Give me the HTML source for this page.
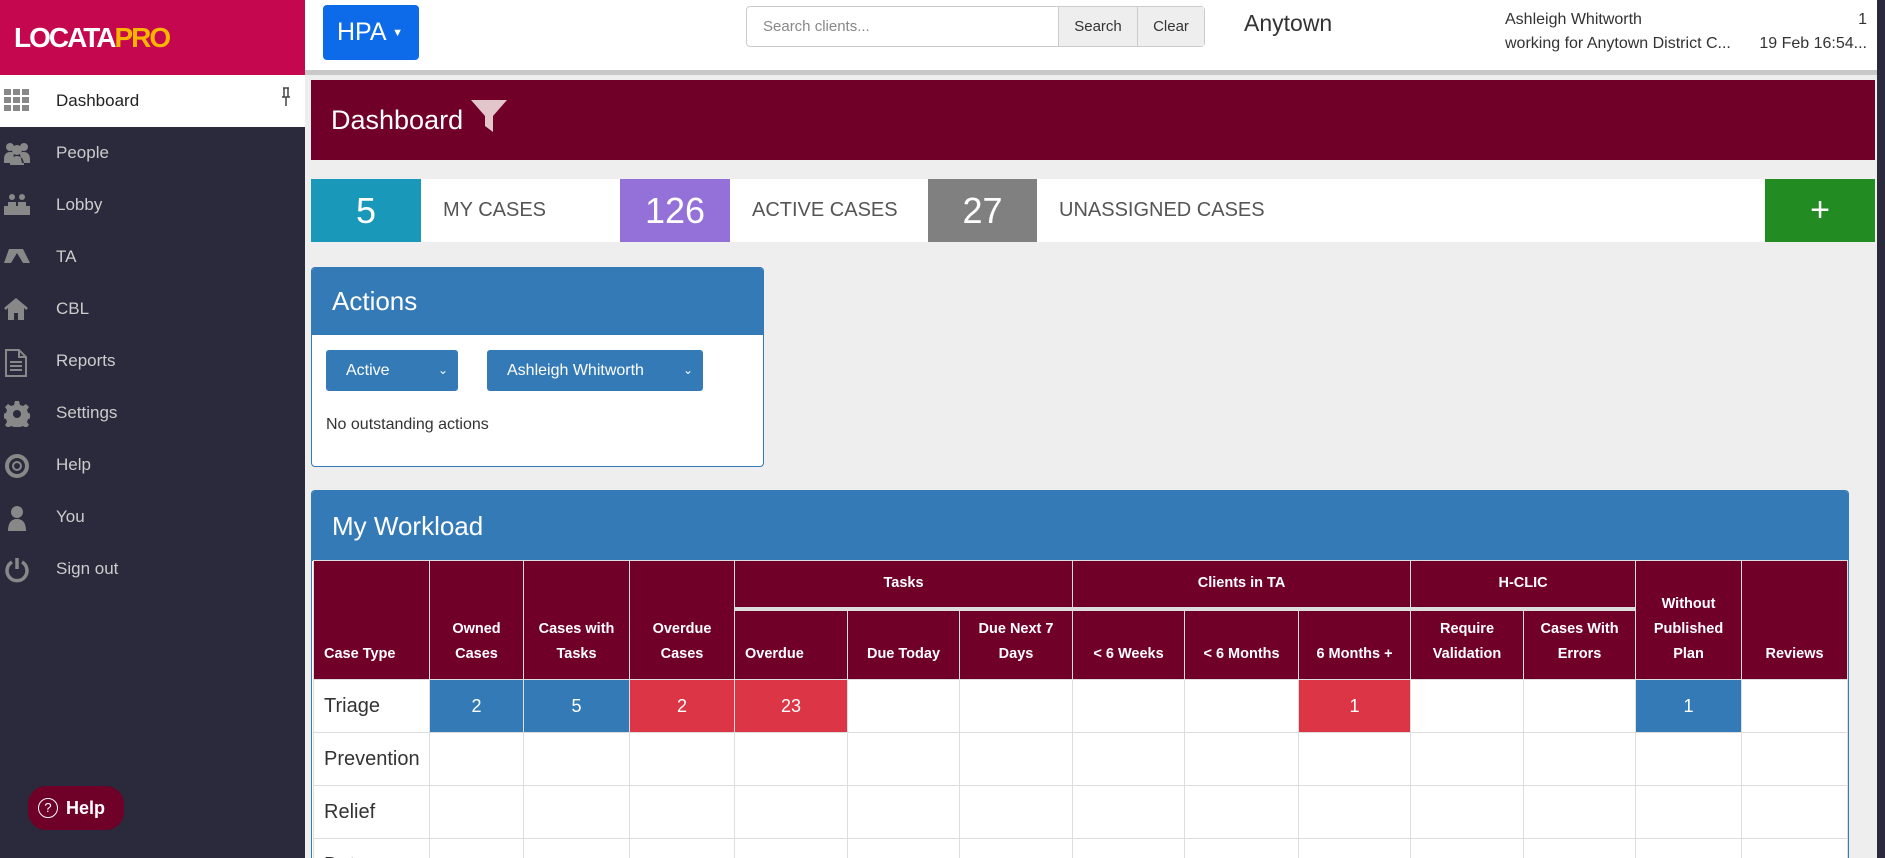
<!DOCTYPE html>
<html style="width:1885px;height:858px;overflow:hidden"><head><meta charset="utf-8"><style>
*{box-sizing:border-box;margin:0;padding:0}
body{width:1885px;height:858px;overflow:hidden;background:#eeeeee;font-family:"Liberation Sans Narrow","Liberation Sans",sans-serif;color:#333;position:relative}
.a{position:absolute}
#logo{left:0;top:0;width:305px;height:75px;background:#c4074f}
#side{left:0;top:75px;width:305px;height:783px;background:#2a2a3c}
.item{position:absolute;left:0;width:305px;height:52px;color:#ccc;font-size:17px;line-height:52px;padding-left:56px}
.item svg{position:absolute;left:4px;top:14px}
#top{left:305px;top:0;width:1580px;height:75px;background:#fff;border-bottom:5px solid #c8c8c8}
.box{position:absolute;top:179px;height:63px;color:#fff;font-size:36px;text-align:center;line-height:63px}
.lbl{position:absolute;top:179px;height:63px;background:#fff;color:#555;font-size:20px;line-height:63px;padding-left:22px}
#wrap{position:absolute;left:311px;top:490px;width:1538px;height:368px;overflow:hidden;background:#fff;border:1px solid #337ab7;border-bottom:none;border-radius:4px 4px 0 0}
table{border-collapse:collapse;table-layout:fixed;position:absolute;left:1px;top:69px;width:1534px;font-size:14.5px}
th{background:#700028;color:#fff;font-weight:bold;border:1px solid #ddd;vertical-align:bottom;padding:0 3px 12px;line-height:25px}
th.g{vertical-align:middle;padding:0;height:48px;border-bottom:4px solid #ddd}
td{height:53px;border:1px solid #ddd;background:#fff;text-align:center;font-size:18px;color:#fff}
td.n{text-align:left;color:#333;font-size:20px;padding-left:10px}
.b{background:#337ab7}.r{background:#dc3545}
</style></head><body>
<div class="a" id="logo"><div class="a" style="left:14px;top:22px;font-size:28px;font-weight:bold;font-family:'Liberation Sans',sans-serif;letter-spacing:-2px;color:#fff">LOCATA<span style="color:#f7b500">PRO</span></div></div>
<div class="a" id="side">
 <div class="item" style="top:0;background:#fff;color:#222">
  <svg width="26" height="22" viewBox="0 0 26 22" fill="#888"><rect x="0" y="0" width="7" height="6"/><rect x="9" y="0" width="7" height="6"/><rect x="18" y="0" width="7" height="6"/><rect x="0" y="8" width="7" height="6"/><rect x="9" y="8" width="7" height="6"/><rect x="18" y="8" width="7" height="6"/><rect x="0" y="16" width="7" height="6"/><rect x="9" y="16" width="7" height="6"/><rect x="18" y="16" width="7" height="6"/></svg>Dashboard
  <svg style="left:281px;top:12px" width="10" height="20" viewBox="0 0 10 20" fill="none" stroke="#444" stroke-width="1.5"><path d="M2 1h6M3 1v9M7 1v9M1 10h8M5 10v9"/></svg></div>
 <div class="item" style="top:52px"><svg width="26" height="24" viewBox="0 0 26 24" fill="#888"><circle cx="6" cy="6" r="4"/><circle cx="20" cy="6" r="4"/><circle cx="13" cy="9" r="5"/><path d="M0 18c0-5 3-7 6-7s4 1 4 2l-2 9H0zM26 18c0-5-3-7-6-7s-4 1-4 2l2 9h8zM6 24c0-6 3-9 7-9s7 3 7 9z"/></svg>People</div>
 <div class="item" style="top:104px"><svg width="26" height="22" viewBox="0 0 26 22" fill="#888"><circle cx="8" cy="4" r="3"/><circle cx="18" cy="4" r="3"/><path d="M4 9h8v4H4zM14 9h8v4h-8zM0 13h26v9H0z"/></svg>Lobby</div>
 <div class="item" style="top:156px"><svg width="26" height="22" viewBox="0 0 26 22" fill="#888"><path d="M5 4h14l7 14H19L13 8l-6 10H0z"/></svg>TA</div>
 <div class="item" style="top:208px"><svg width="24" height="24" viewBox="0 0 24 24" fill="#888"><path d="M12 1L0 11l2 2 2-2v12h6v-7h4v7h6V11l2 2 2-2z"/></svg>CBL</div>
 <div class="item" style="top:260px"><svg width="24" height="28" viewBox="0 0 24 28" fill="none" stroke="#888" stroke-width="2"><path d="M2 1h13l7 7v19H2zM15 1v7h7M6 13h12M6 17h12M6 21h12"/></svg>Reports</div>
 <div class="item" style="top:312px"><svg width="26" height="26" viewBox="0 0 26 26" fill="#888"><path d="M11 0h4l1 4 3 1 3-2 3 3-2 3 1 3 4 1v4l-4 1-1 3 2 3-3 3-3-2-3 1-1 4h-4l-1-4-3-1-3 2-3-3 2-3-1-3-4-1v-4l4-1 1-3-2-3 3-3 3 2 3-1z"/><circle cx="13" cy="13" r="4" fill="#2a2a3c"/></svg>Settings</div>
 <div class="item" style="top:364px"><svg width="26" height="26" viewBox="0 0 26 26" fill="none" stroke="#888" stroke-width="4"><circle cx="13" cy="13" r="10"/><circle cx="13" cy="13" r="4" stroke-width="2"/></svg>Help</div>
 <div class="item" style="top:416px"><svg width="26" height="26" viewBox="0 0 26 26" fill="#888"><circle cx="13" cy="7" r="6"/><path d="M4 26c0-9 4-12 9-12s9 3 9 12z"/></svg>You</div>
 <div class="item" style="top:468px"><svg width="26" height="26" viewBox="0 0 26 26" fill="none" stroke="#888" stroke-width="3.5"><path d="M8 5a10 10 0 1 0 10 0M13 1v11"/></svg>Sign out</div>
 <div class="a" style="left:28px;top:711px;width:96px;height:44px;background:#6f0027;border-radius:18px;color:#fff;font-weight:bold;font-size:18px;line-height:44px;padding-left:38px"><span style="position:absolute;left:10px;top:12px;width:20px;height:20px;border:1.5px solid #fff;border-radius:50%;font-size:13px;line-height:17px;text-align:center;font-weight:normal">?</span>Help</div>
</div>
<div class="a" id="top"></div>
<div class="a" style="left:323px;top:5px;width:96px;height:55px;background:#0d6ae8;border-radius:4px;color:#fff;font-size:25px;line-height:55px;padding-left:14px">HPA <span style="font-size:11px;vertical-align:middle">&#9660;</span></div>
<div class="a" style="left:746px;top:6px;width:459px;height:41px;border:1px solid #ccc;border-radius:4px;background:#fff;font-size:15px;line-height:39px">
 <span style="position:absolute;left:16px;color:#888">Search clients...</span>
 <span style="position:absolute;left:311px;width:79px;height:39px;background:#eee;border-left:1px solid #ccc;text-align:center;color:#333">Search</span>
 <span style="position:absolute;left:390px;width:67px;height:39px;background:#eee;border-left:1px solid #ccc;text-align:center;color:#333">Clear</span></div>
<div class="a" style="left:1244px;top:10px;font-size:23px;color:#333">Anytown</div>
<div class="a" style="left:1505px;top:8px;font-size:16px;color:#333;line-height:24px">Ashleigh Whitworth<br>working for Anytown District C...</div>
<div class="a" style="left:1700px;top:8px;width:167px;text-align:right;font-size:16px;color:#333;line-height:24px">1<br>19 Feb 16:54...</div>
<div class="a" style="left:1877px;top:0;width:8px;height:858px;background:#2a2a3c"></div>
<div class="a" style="left:311px;top:80px;width:1564px;height:80px;background:#700028;color:#fff;font-size:27px;line-height:80px;padding-left:20px">Dashboard <svg style="vertical-align:-3px" width="36" height="32" viewBox="0 0 36 32"><path d="M0 0h36L22 16v16l-8-6V16z" fill="#e3c5cc"/></svg></div>
<div class="box" style="left:311px;width:110px;background:#1a98b9">5</div>
<div class="lbl" style="left:421px;width:199px">MY CASES</div>
<div class="box" style="left:620px;width:110px;background:#9371d8">126</div>
<div class="lbl" style="left:730px;width:198px">ACTIVE CASES</div>
<div class="box" style="left:928px;width:109px;background:#808080">27</div>
<div class="lbl" style="left:1037px;width:728px">UNASSIGNED CASES</div>
<div class="box" style="left:1765px;width:110px;background:#228b22;font-size:34px">+</div>
<div class="a" style="left:311px;top:267px;width:453px;height:200px;background:#fff;border:1px solid #337ab7;border-radius:4px;overflow:hidden">
 <div style="height:67px;background:#337ab7;color:#fff;font-size:26px;line-height:67px;padding-left:20px">Actions</div>
 <div class="a" style="left:14px;top:82px;width:132px;height:41px;background:#337ab7;border-radius:3px;color:#fff;font-size:16px;line-height:41px;padding-left:20px">Active<span style="position:absolute;right:10px;font-size:12px">&#8964;</span></div>
 <div class="a" style="left:175px;top:82px;width:216px;height:41px;background:#337ab7;border-radius:3px;color:#fff;font-size:16px;line-height:41px;padding-left:20px">Ashleigh Whitworth<span style="position:absolute;right:10px;font-size:12px">&#8964;</span></div>
 <div class="a" style="left:14px;top:148px;font-size:16px;color:#333">No outstanding actions</div>
</div>
<div id="wrap">
 <div style="height:70px;background:#337ab7;color:#fff;font-size:26px;line-height:70px;padding-left:20px">My Workload</div>
<table>
<colgroup><col style="width:116px"><col style="width:94px"><col style="width:106px"><col style="width:105px"><col style="width:113px"><col style="width:112px"><col style="width:113px"><col style="width:112px"><col style="width:114px"><col style="width:112px"><col style="width:113px"><col style="width:112px"><col style="width:106px"><col style="width:106px"></colgroup>
<tr><th rowspan="2" style="text-align:left;padding-left:10px">Case Type</th><th rowspan="2">Owned<br>Cases</th><th rowspan="2">Cases with<br>Tasks</th><th rowspan="2">Overdue<br>Cases</th><th colspan="3" class="g">Tasks</th><th colspan="3" class="g">Clients in TA</th><th colspan="2" class="g">H-CLIC</th><th rowspan="2">Without<br>Published<br>Plan</th><th rowspan="2">Reviews</th></tr>
<tr style="height:71px"><th style="text-align:left;padding-left:10px">Overdue</th><th>Due Today</th><th>Due Next 7<br>Days</th><th>&lt; 6 Weeks</th><th>&lt; 6 Months</th><th>6 Months +</th><th>Require<br>Validation</th><th>Cases With<br>Errors</th></tr>
<tr><td class="n">Triage</td><td class="b">2</td><td class="b">5</td><td class="r">2</td><td class="r">23</td><td></td><td></td><td></td><td></td><td class="r">1</td><td></td><td></td><td class="b">1</td><td></td></tr>
<tr><td class="n">Prevention</td><td></td><td></td><td></td><td></td><td></td><td></td><td></td><td></td><td></td><td></td><td></td><td></td><td></td></tr>
<tr><td class="n">Relief</td><td></td><td></td><td></td><td></td><td></td><td></td><td></td><td></td><td></td><td></td><td></td><td></td><td></td></tr>
<tr><td class="n">Duty</td><td></td><td></td><td></td><td></td><td></td><td></td><td></td><td></td><td></td><td></td><td></td><td></td><td></td></tr>
</table>
</div>
</body></html>
